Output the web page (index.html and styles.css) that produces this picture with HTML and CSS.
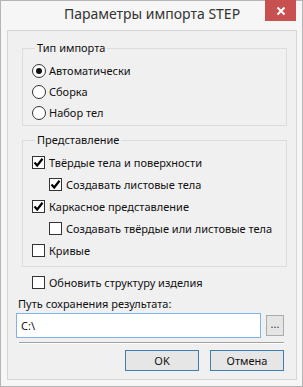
FILE: index.html
```html
<!DOCTYPE html>
<html lang="ru">
<head>
  <meta charset="UTF-8">
  <title>Параметры импорта STEP</title>
  <link rel="stylesheet" href="styles.css">
</head>
<body>
  <div class="window">
    <div class="titlebar">
      <span class="title">Параметры импорта STEP</span>
      <button class="close-btn">
        <svg width="10" height="10" viewBox="0 0 10 10"><path d="M1.5 1.5 L8.5 8.5 M8.5 1.5 L1.5 8.5" stroke="#fff" stroke-width="2"/></svg>
      </button>
    </div>

    <div class="client">
      <fieldset class="group">
        <legend>Тип импорта</legend>
        <div class="row"><span class="radio checked"></span>Автоматически</div>
        <div class="row"><span class="radio"></span>Сборка</div>
        <div class="row"><span class="radio"></span>Набор тел</div>
      </fieldset>

      <fieldset class="group group-view">
        <legend>Представление</legend>
        <div class="row"><span class="check checked"></span>Твёрдые тела и поверхности</div>
        <div class="row sub"><span class="check checked"></span>Создавать листовые тела</div>
        <div class="row"><span class="check checked"></span>Каркасное представление</div>
        <div class="row sub"><span class="check"></span>Создавать твёрдые или листовые тела</div>
        <div class="row"><span class="check"></span>Кривые</div>
      </fieldset>

      <div class="row update"><span class="check"></span>Обновить структуру изделия</div>

      <div class="path-label">Путь сохранения результата:</div>
      <div class="path-row">
        <div class="path-input">C:\</div>
        <button class="browse-btn">...</button>
      </div>

      <div class="separator"></div>

      <div class="buttons">
        <button class="btn">OK</button>
        <button class="btn">Отмена</button>
      </div>
    </div>
  </div>
</body>
</html>
```

FILE: styles.css
```css
body {
  margin: 0;
  font-family: "Noto Sans", "Open Sans", sans-serif;
  font-size: 11px;
  color: #111;
}
.window {
  width: 303px;
  height: 387px;
  box-sizing: border-box;
  border: 1px solid #b4b4b4;
  background-color: #f6f6f6;
  padding: 0 5px 6px 6px;
  display: flex;
  flex-direction: column;
}
.titlebar {
  height: 29px;
  display: flex;
  justify-content: center;
  align-items: center;
  position: relative;
}
.title {
  font-size: 14px;
  color: #333;
  margin-top: -4px;
}
.close-btn {
  position: absolute;
  top: -1px;
  right: 1px;
  width: 31px;
  height: 21px;
  border: none;
  background-color: #c75050;
  padding: 0;
  display: flex;
  justify-content: center;
  align-items: center;
}
.client {
  flex: 1;
  background-color: #f0f0f0;
  border: 1px solid #d6d6d6;
  padding: 9px 9px 0 14px;
}
.group {
  margin: 0;
  padding: 4px 0 2px 9px;
  border: 1px solid #dcdcdc;
  min-width: 0;
}
.group legend {
  padding: 0 2px;
  margin-left: 3px;
  line-height: 16px;
}
.group-view {
  margin-top: 6px;
  padding: 3px 0 5px 9px;
}
.row {
  height: 21px;
  display: flex;
  align-items: center;
  white-space: nowrap;
}
.group-view .row {
  height: 22px;
}
.row.sub {
  padding-left: 17px;
}
.radio {
  width: 12px;
  height: 12px;
  border: 1px solid #333;
  border-radius: 50%;
  background-color: #fff;
  margin-right: 3px;
  position: relative;
  flex: none;
}
.radio.checked::after {
  content: "";
  position: absolute;
  left: 3px;
  top: 3px;
  width: 6px;
  height: 6px;
  border-radius: 50%;
  background-color: #111;
}
.check {
  width: 11px;
  height: 11px;
  border: 1px solid #333;
  background-color: #fff;
  margin-right: 4px;
  flex: none;
}
.check.checked {
  background-image: url("data:image/svg+xml,%3Csvg xmlns='http://www.w3.org/2000/svg' width='11' height='11' viewBox='0 0 11 11'%3E%3Cpath d='M1.5 5.5 L4.2 8.5 L9.5 1.8' fill='none' stroke='%23000' stroke-width='2.2'/%3E%3C/svg%3E");
}
.update {
  margin-top: 5px;
  padding-left: 10px;
}
.path-label {
  margin-left: -4px;
  margin-top: 2px;
  line-height: 18px;
}
.path-row {
  display: flex;
  align-items: center;
  margin-left: -6px;
  margin-top: 0;
  margin-right: 3px;
}
.path-input {
  flex: 1;
  height: 25px;
  box-sizing: border-box;
  border: 1px solid #7eb4ea;
  background-color: #fff;
  padding: 0 4px;
  line-height: 23px;
}
.browse-btn {
  width: 18px;
  height: 21px;
  margin-left: 5px;
  border: 1px solid #acacac;
  background-color: #e5e5e5;
  font-family: inherit;
  font-size: 11px;
  padding: 0 0 4px;
  color: #333;
}
.separator {
  height: 1px;
  background-color: #a0a0a0;
  border-bottom: 1px solid #fff;
  margin: 4px 3px 0 -3px;
}
.buttons {
  display: flex;
  justify-content: flex-end;
  gap: 11px;
  margin-top: 6px;
  margin-right: 3px;
}
.btn {
  width: 74px;
  height: 21px;
  border: 1px solid #3c7fb1;
  background-color: #e6e6e6;
  font-family: inherit;
  font-size: 11px;
  color: #111;
  padding: 0;
}
```
